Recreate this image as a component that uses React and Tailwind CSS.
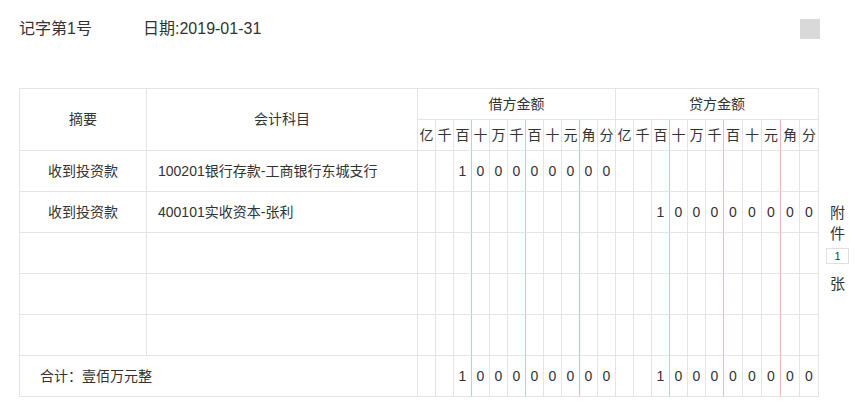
const DEBIT_UNITS = ['亿', '千', '百', '十', '万', '千', '百', '十', '元', '角', '分'];

const GRID = 'grid grid-cols-[127px_271px_repeat(17,18px)_repeat(5,19px)]';

// thousands separators blue, yuan/jiao separator red
const lineCls = (i) => {
  const k = i % 11;
  if (k === 2 || k === 5) return 'border-r border-b border-r-[#aed3e6] border-b-[#e4e4e4]';
  if (k === 8) return 'border-r border-b border-r-[#e6b8b8] border-b-[#e4e4e4]';
  return 'border-r border-b border-[#e4e4e4]';
};

const rows = [
  { summary: '收到投资款', account: '100201银行存款-工商银行东城支行', debit: '100000000', credit: '' },
  { summary: '收到投资款', account: '400101实收资本-张利', debit: '', credit: '100000000' },
  { summary: '', account: '', debit: '', credit: '' },
  { summary: '', account: '', debit: '', credit: '' },
  { summary: '', account: '', debit: '', credit: '' },
];

// right-align an amount into 11 digit cells
const toCells = (amount) => {
  const cells = Array(11).fill('');
  const digits = amount.split('');
  digits.forEach((d, idx) => {
    cells[11 - digits.length + idx] = d;
  });
  return cells;
};

const AmountCells = ({ debit, credit }) => (
  <>
    {[...toCells(debit), ...toCells(credit)].map((d, i) => (
      <div key={i} className={`${lineCls(i)} flex items-center justify-center text-[14px]`}>
        {d}
      </div>
    ))}
  </>
);

export default function App() {
  return (
    <div
      className="w-[856px] h-[417px] bg-white text-[#333] pl-[19px]"
      style={{ fontFamily: '"Liberation Sans", "Noto Sans CJK SC", sans-serif' }}
    >
      <div className="flex items-center h-[24px] mt-[17px] text-[16px]">
        <span className="w-[124px]">记字第1号</span>
        <span>日期:2019-01-31</span>
        <div className="ml-auto mr-[36px] w-[20px] h-[20px] bg-[#d9d9d9]" />
      </div>

      <div className="flex mt-[47px]">
        <div className="border-t border-l border-[#e4e4e4]">
          <div className={`${GRID} grid-rows-[31px_31px] text-[14px]`}>
            <div className="row-span-2 border-r border-b border-[#e4e4e4] flex items-center justify-center">摘要</div>
            <div className="row-span-2 border-r border-b border-[#e4e4e4] flex items-center justify-center">会计科目</div>
            <div className="col-span-11 border-r border-b border-[#e4e4e4] flex items-center justify-center">借方金额</div>
            <div className="col-span-11 border-r border-b border-[#e4e4e4] flex items-center justify-center">贷方金额</div>
            {[...DEBIT_UNITS, ...DEBIT_UNITS].map((u, i) => (
              <div key={i} className={`${lineCls(i)} flex items-center justify-center text-[14px]`}>
                {u}
              </div>
            ))}
          </div>

          {rows.map((r, idx) => (
            <div key={idx} className={`${GRID} h-[41px] text-[14px]`}>
              <div className="border-r border-b border-[#e4e4e4] flex items-center justify-center">{r.summary}</div>
              <div className="border-r border-b border-[#e4e4e4] flex items-center pl-[11px]">{r.account}</div>
              <AmountCells debit={r.debit} credit={r.credit} />
            </div>
          ))}

          <div className={`${GRID} h-[41px] text-[14px]`}>
            <div className="col-span-2 border-r border-b border-[#e4e4e4] flex items-center pl-[20px]">合计：壹佰万元整</div>
            <AmountCells debit="100000000" credit="100000000" />
          </div>
        </div>

        <div className="w-[38px] flex flex-col items-center pt-[114px] text-[15px] leading-[21px]">
          <span>附</span>
          <span>件</span>
          <div className="mt-[4px] w-[23px] h-[16px] border border-[#e0e0e0] flex items-center justify-center text-[11px] leading-none">1</div>
          <span className="mt-[9px]">张</span>
        </div>
      </div>
    </div>
  );
}
